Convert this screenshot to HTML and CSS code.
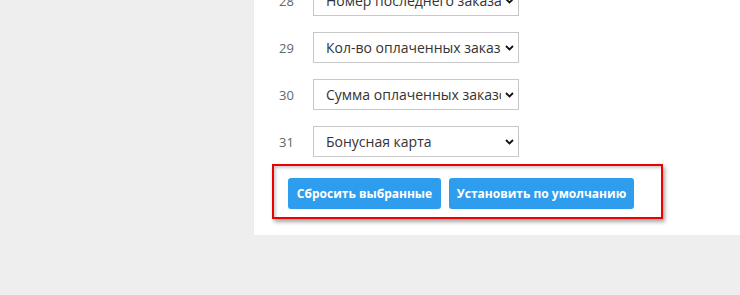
FILE: index.html
```html
<!DOCTYPE html>
<html lang="ru">
<head>
<meta charset="utf-8">
<link rel="stylesheet" href="styles.css">
</head>
<body>
<div class="panel">
  <div class="rows">
    <div class="row"><span class="num">28</span><div class="select"><span class="val">Номер последнего заказа</span><svg class="chev" width="9" height="6" viewBox="0 0 9 6"><path d="M1 1L4.5 4.5L8 1" fill="none" stroke="#111" stroke-width="1.8"/></svg></div></div>
    <div class="row"><span class="num">29</span><div class="select"><span class="val">Кол-во оплаченных заказов</span><svg class="chev" width="9" height="6" viewBox="0 0 9 6"><path d="M1 1L4.5 4.5L8 1" fill="none" stroke="#111" stroke-width="1.8"/></svg></div></div>
    <div class="row"><span class="num">30</span><div class="select"><span class="val">Сумма оплаченных заказов</span><svg class="chev" width="9" height="6" viewBox="0 0 9 6"><path d="M1 1L4.5 4.5L8 1" fill="none" stroke="#111" stroke-width="1.8"/></svg></div></div>
    <div class="row"><span class="num">31</span><div class="select"><span class="val">Бонусная карта</span><svg class="chev" width="9" height="6" viewBox="0 0 9 6"><path d="M1 1L4.5 4.5L8 1" fill="none" stroke="#111" stroke-width="1.8"/></svg></div></div>
  </div>
  <div class="highlight">
    <button class="btn btn-reset">Сбросить выбранные</button>
    <button class="btn btn-default">Установить по умолчанию</button>
  </div>
</div>
</body>
</html>
```
FILE: styles.css
```css
html, body {
  margin: 0;
  padding: 0;
}
body {
  background: #eeeeee;
  font-family: "Open Sans", "Liberation Sans", sans-serif;
  width: 740px;
  height: 295px;
  overflow: hidden;
}
.panel {
  margin-left: 254px;
  width: 486px;
  height: 235px;
  background: #ffffff;
  padding-left: 25px;
  box-sizing: border-box;
  overflow: hidden;
}
.rows {
  margin-top: -15px;
}
.row {
  display: flex;
  align-items: center;
  height: 31px;
  margin-bottom: 16px;
}
.row:last-child {
  margin-bottom: 0;
}
.num {
  width: 34px;
  font-size: 13px;
  color: #666666;
}
.select {
  width: 206px;
  height: 31px;
  box-sizing: border-box;
  border: 1px solid #c8c8c8;
  display: flex;
  align-items: center;
  padding-left: 12px;
}
.val {
  width: 175px;
  overflow: hidden;
  white-space: nowrap;
  font-size: 14px;
  color: #333333;
}
.chev {
  margin-left: 4px;
}
.highlight {
  margin-top: 7px;
  margin-left: -7px;
  width: 391px;
  height: 55px;
  box-sizing: border-box;
  border: 2px solid #ee0000;
  box-shadow: 2px 3px 4px rgba(0,0,0,0.35), inset 2px 2px 3px rgba(0,0,0,0.2);
  padding: 12px 0 0 14px;
  display: flex;
  gap: 8px;
}
.btn {
  height: 31px;
  border: none;
  border-radius: 3px;
  background: #2f9ded;
  color: #ffffff;
  font-family: "Open Sans", "Liberation Sans", sans-serif;
  font-weight: 700;
  font-size: 12px;
  padding: 0;
}
.btn-reset {
  width: 153px;
}
.btn-default {
  width: 185px;
}
```
